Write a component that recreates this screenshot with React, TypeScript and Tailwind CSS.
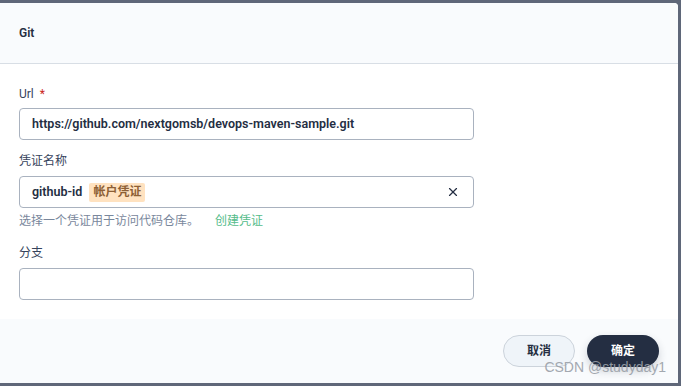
import { X } from "lucide-react";

const font = { fontFamily: "Roboto, 'Noto Sans CJK SC', sans-serif" };

const App = () => {
  return (
    <div className="w-[681px] h-[386px] bg-[#5f6779] pt-[3px] pr-[3px] pb-[3px] relative" style={font}>
      <div className="flex flex-col w-[678px] h-[380px] bg-white rounded-tr-[4px] overflow-hidden">
        <div className="flex items-center h-[61px] px-[19px] bg-[#f9fbfd] border-b border-[#d8dee5]">
          <span className="font-semibold text-[12px] text-[#242e42]">Git</span>
        </div>

        <div className="flex flex-col flex-1 px-[19px] pt-[21px]">
          <label className="text-[12px] text-[#36435c] leading-[18px]">
            Url <span className="text-[#ca2621] ml-[3px]">*</span>
          </label>
          <div className="flex items-center mt-[5px] w-[455px] h-[32px] px-[12px] border border-[#a9b2bf] rounded-[4px]">
            <span className="font-semibold text-[12.5px] text-[#242e42]">
              https://github.com/nextgomsb/devops-maven-sample.git
            </span>
          </div>

          <label className="mt-[12px] text-[12px] text-[#36435c] leading-[18px]">凭证名称</label>
          <div className="flex items-center mt-[6px] w-[455px] h-[32px] pl-[12px] pr-[13px] border border-[#a9b2bf] rounded-[4px]">
            <span className="font-semibold text-[12.5px] text-[#242e42]">github-id</span>
            <span className="ml-[7px] px-[4px] h-[19px] flex items-center rounded-[2px] bg-[#ffe2c0] text-[12px] font-semibold text-[#8d5f35]">
              帐户凭证
            </span>
            <X className="ml-auto w-[14px] h-[14px] text-[#242e42]" strokeWidth={2} />
          </div>
          <div className="mt-[4px] text-[12px] leading-[18px] flex">
            <span className="text-[#79879c]">选择一个凭证用于访问代码仓库。</span>
            <span className="ml-[16px] text-[#55bc8a]">创建凭证</span>
          </div>

          <label className="mt-[14px] text-[12px] text-[#36435c] leading-[18px]">分支</label>
          <div className="mt-[6px] w-[455px] h-[32px] border border-[#a9b2bf] rounded-[4px]" />
        </div>

        <div className="flex justify-end items-start gap-[12px] h-[64px] pt-[16px] pr-[19px] bg-[#f9fbfd]">
          <button className="w-[72px] h-[32px] rounded-full bg-[#eff4f9] border border-[#ccd3db] text-[12px] font-semibold text-[#242e42]">
            取消
          </button>
          <button className="w-[72px] h-[32px] rounded-full bg-[#242e42] text-[12px] font-semibold text-white shadow-[0_4px_8px_rgba(36,46,66,0.2)]">
            确定
          </button>
        </div>
      </div>
      <span
        className="absolute right-[15px] bottom-[8px] text-[14px] text-[#9aa0a8] opacity-90"
        style={{ fontFamily: "'Liberation Sans', Arial, sans-serif" }}
      >
        CSDN @studyday1
      </span>
    </div>
  );
};

export default App;
